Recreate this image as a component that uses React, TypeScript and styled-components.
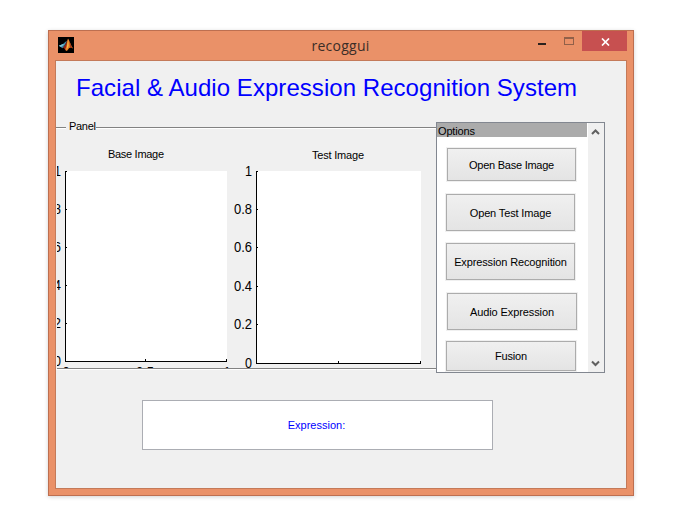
import React from "react";
import styled, { createGlobalStyle } from "styled-components";

const GlobalStyle = createGlobalStyle`
  *, *::before, *::after { box-sizing: border-box; }
  html, body { margin: 0; padding: 0; background: #fff; overflow: hidden; }
  body { font-family: "Liberation Sans", Arial, sans-serif; font-size: 11px; color: #000; }
`;

const Desktop = styled.main`
  width: 677px;
  height: 514px;
  padding: 30px 43px 18px 48px;
  background: #fff;
`;

const Window = styled.section`
  width: 586px;
  height: 466px;
  border: 1px solid #bd6f50;
  background: #ea9168;
  padding: 0 6px 6px;
  box-shadow: 0 1px 4px rgba(0, 0, 0, 0.18);
`;

const TitleBar = styled.header`
  display: grid;
  grid-template-columns: 100px 1fr 100px;
  height: 29px;
`;

const AppIcon = styled.svg`
  display: block;
  width: 16px;
  height: 16px;
  margin: 6px 0 0 3px;
`;

const WindowTitle = styled.span`
  font: 14px/18px "Open Sans", "Noto Sans", sans-serif;
  color: #3b2d27;
  text-align: center;
  padding: 6px 1px 0 0;
  letter-spacing: 0.25px;
`;

const WindowControls = styled.div`
  display: flex;
  justify-content: flex-end;
  align-items: flex-start;
`;

const ControlIcon = styled.svg`
  display: block;
  width: 27px;
  height: 20px;
`;

const CloseButton = styled.button`
  width: 45px;
  height: 20px;
  padding: 1px 0 0 1px;
  border: 0;
  background: #c75050;
  display: grid;
  place-items: center;
`;

const Client = styled.div`
  display: flex;
  flex-direction: column;
  width: 572px;
  height: 429px;
  border: 1px solid #c47a59;
  background: #f0f0f0;
`;

const Heading = styled.h1`
  margin: 0;
  height: 61px;
  padding: 13px 0 0 20px;
  font-size: 24px;
  line-height: 28px;
  font-weight: 400;
  letter-spacing: 0.05px;
  color: #00f;
  white-space: nowrap;
`;

const Workspace = styled.div`
  display: flex;
  height: 251px;
`;

const Panel = styled.section`
  width: 380px;
  height: 248px;
  padding-left: 1px;
  display: flex;
  flex-direction: column;
  border-bottom: 1px solid #fff;
`;

const Legend = styled.div`
  display: flex;
  align-items: flex-start;
  height: 12px;
  margin-left: -1px;
  line-height: 9px;
  letter-spacing: -0.3px;

  &::before, &::after {
    content: "";
    height: 2px;
    margin-top: 5px;
    border-top: 1px solid #828282;
    background: #fff;
  }
  &::before { width: 10px; margin-right: 3px; }
  &::after { flex: 1; }
`;

const Plots = styled.div`
  display: flex;
  height: 235px;
  border-bottom: 1px solid #828282;
`;

const Figure = styled.figure<{ $width: number }>`
  width: ${(p) => p.$width}px;
  margin: 0;
`;

const Chart = styled.svg`
  display: block;
  width: 100%;
  height: 234px;
  overflow: hidden;
  font-family: "Liberation Sans", Arial, sans-serif;
`;

const Options = styled.aside`
  display: flex;
  width: 169px;
  height: 251px;
  border: 1px solid #828790;
  background: #fff;
`;

const OptionList = styled.div`
  width: 151px;
`;

const OptionsTitle = styled.div`
  width: 150px;
  height: 14px;
  padding-left: 1px;
  background: #ababab;
  line-height: 16px;
  letter-spacing: -0.15px;
`;

type ButtonBox = { $w: number; $h: number; $gap: number; $indent: number; $tracking: number };

const OptionButton = styled.button<ButtonBox>`
  display: block;
  width: ${(p) => p.$w}px;
  height: ${(p) => p.$h}px;
  margin: ${(p) => p.$gap}px 0 0 ${(p) => p.$indent}px;
  padding: 1px 0 0;
  border: 1px solid #acacac;
  background: linear-gradient(#f0f0f0, #e4e4e4);
  box-shadow: 0 0 0 1px #f0f0f0;
  font: 11px/13px "Liberation Sans", Arial, sans-serif;
  letter-spacing: ${(p) => p.$tracking}px;
  color: #000;
  white-space: nowrap;
`;

const ScrollBar = styled.div`
  display: flex;
  flex-direction: column;
  justify-content: space-between;
  width: 16px;
  background: #f0f0f0;
`;

const ScrollArrow = styled.svg`
  display: block;
  width: 16px;
  height: 17px;
`;

const ExpressionBox = styled.output`
  display: grid;
  place-items: center;
  width: 351px;
  height: 50px;
  margin: 27px 0 0 86px;
  padding-right: 2px;
  border: 1px solid #abadb3;
  background: #fff;
  color: #00f;
`;

type AxesProps = {
  title: string;
  titleX: number;
  titleY: number;
  titleWidth: number;
  x: number;
  bottom: number;
  right: number;
  labelY: number[];
  tickY: number[];
  xTicks: boolean;
};

const VALUES = ["1", "0.8", "0.6", "0.4", "0.2", "0"];
const TOP = 37;

function Axes(p: AxesProps) {
  const mid = Math.round((p.x + p.right) / 2) - 1;
  return (
    <Chart>
      <text x={p.titleX} y={p.titleY} fontSize="11" textLength={p.titleWidth}>{p.title}</text>
      <rect x={p.x} y={TOP} width={p.right - p.x} height={p.bottom - TOP} fill="#fff" />
      <g fill="#000" shapeRendering="crispEdges">
        <rect x={p.x} y={TOP} width="1" height={p.bottom - TOP + 1} />
        <rect x={p.x} y={p.bottom} width={p.right - p.x} height="1" />
        <rect x={mid} y={p.bottom - 2} width="1" height="2" />
        <rect x={p.right - 1} y={p.bottom - 2} width="1" height="2" />
        {p.tickY.map((y) => <rect key={y} x={p.x + 1} y={y} width="1" height="1" />)}
      </g>
      <g fontSize="14" textAnchor="end">
        {VALUES.map((value, i) => (
          <text
            key={value}
            x={p.x - 4}
            y={p.labelY[i]}
            textLength={value.length > 1 ? 18 : 7}
            lengthAdjust="spacingAndGlyphs"
          >
            {value}
          </text>
        ))}
      </g>
      {p.xTicks && (
        <g fontSize="13" textAnchor="middle">
          <text x={p.x + 1} y="242">0</text>
          <text x={mid} y="242">0.5</text>
          <text x={p.right} y="242">1</text>
        </g>
      )}
    </Chart>
  );
}

const OPTIONS = [
  { label: "Open Base Image", w: 129, h: 33, gap: 11, indent: 10, tracking: -0.25 },
  { label: "Open Test Image", w: 129, h: 37, gap: 13, indent: 9, tracking: -0.14 },
  { label: "Expression Recognition", w: 129, h: 37, gap: 12, indent: 9, tracking: -0.13 },
  { label: "Audio Expression", w: 130, h: 37, gap: 13, indent: 10, tracking: -0.1 },
  { label: "Fusion", w: 130, h: 30, gap: 11, indent: 9, tracking: -0.2 },
];

export default function App() {
  return (
    <Desktop>
      <GlobalStyle />
      <Window>
        <TitleBar>
          <AppIcon viewBox="0 0 16 16" aria-hidden="true">
            <path fill="#000" d="M0 0h16v16H0z" />
            <path fill="#3c8ca8" d="M.8 8.700 5 7l2.500-2.300L9 4 7 8l-2.500 3.200z" />
            <path fill="#7fc0d2" d="m.8 8.700 4.200-1.700 1 .6L3 10z" />
            <path fill="#8f2618" d="M4.500 11 7 8l3-6 .5 5L7.500 13.500 6 11z" />
            <path fill="#e87922" d="M10 1.500c1.500 2 2.200 6 5 10-2-1.500-3.500-1-4.500.5-.7 1-1.500 2-2.500 2l-.7-2C9 9 9.200 5 10 1.500z" />
            <path fill="#f7c64a" d="M10 2c.5 2 .4 4.500.5 7l-2 4C9.500 9 9.500 5 10 2z" />
            <path fill="#a63a18" d="M11.500 4c1 2.500 1.500 5 3.500 7.500-1.500-1-2-1-3-.5z" />
          </AppIcon>
          <WindowTitle>recoggui</WindowTitle>
          <WindowControls>
            <ControlIcon viewBox="0 0 27 20" shapeRendering="crispEdges">
              <path fill="#2b211d" d="M10 12h8v2h-8z" />
            </ControlIcon>
            <ControlIcon viewBox="0 0 27 20" shapeRendering="crispEdges">
              <path fill="#916049" fillRule="evenodd" d="M9 6h10v8H9zM10 8v5h8V8z" />
            </ControlIcon>
            <CloseButton aria-label="Close">
              <svg width="9" height="8" viewBox="0 0 9 8">
                <path d="m1 .5 7 7m0-7-7 7" stroke="#fff" strokeWidth="1.700" />
              </svg>
            </CloseButton>
          </WindowControls>
        </TitleBar>
        <Client>
          <Heading>Facial &amp; Audio Expression Recognition System</Heading>
          <Workspace>
            <Panel>
              <Legend>Panel</Legend>
              <Plots>
                <Figure $width={172}>
                  <Axes
                    title="Base Image" titleX={51} titleY={24} titleWidth={56}
                    x={8} bottom={227} right={170}
                    labelY={[42, 80, 118, 156, 194, 232]}
                    tickY={[37, 75, 113, 151, 189]}
                    xTicks
                  />
                </Figure>
                <Figure $width={207}>
                  <Axes
                    title="Test Image" titleX={83} titleY={25} titleWidth={52}
                    x={27} bottom={229} right={192}
                    labelY={[42, 80, 118, 157, 195, 234]}
                    tickY={[37, 75, 113, 152, 190]}
                    xTicks={false}
                  />
                </Figure>
              </Plots>
            </Panel>
            <Options>
              <OptionList>
                <OptionsTitle>Options</OptionsTitle>
                {OPTIONS.map((o) => (
                  <OptionButton
                    key={o.label}
                    $w={o.w}
                    $h={o.h}
                    $gap={o.gap}
                    $indent={o.indent}
                    $tracking={o.tracking}
                  >
                    {o.label}
                  </OptionButton>
                ))}
              </OptionList>
              <ScrollBar>
                <ScrollArrow viewBox="0 0 16 17">
                  <path d="M4 11 7.500 7.500 11 11" fill="none" stroke="#606060" strokeWidth="2" />
                </ScrollArrow>
                <ScrollArrow viewBox="0 0 16 17">
                  <path d="M4 6.500 7.500 10 11 6.500" fill="none" stroke="#606060" strokeWidth="2" />
                </ScrollArrow>
              </ScrollBar>
            </Options>
          </Workspace>
          <ExpressionBox>Expression:</ExpressionBox>
        </Client>
      </Window>
    </Desktop>
  );
}
